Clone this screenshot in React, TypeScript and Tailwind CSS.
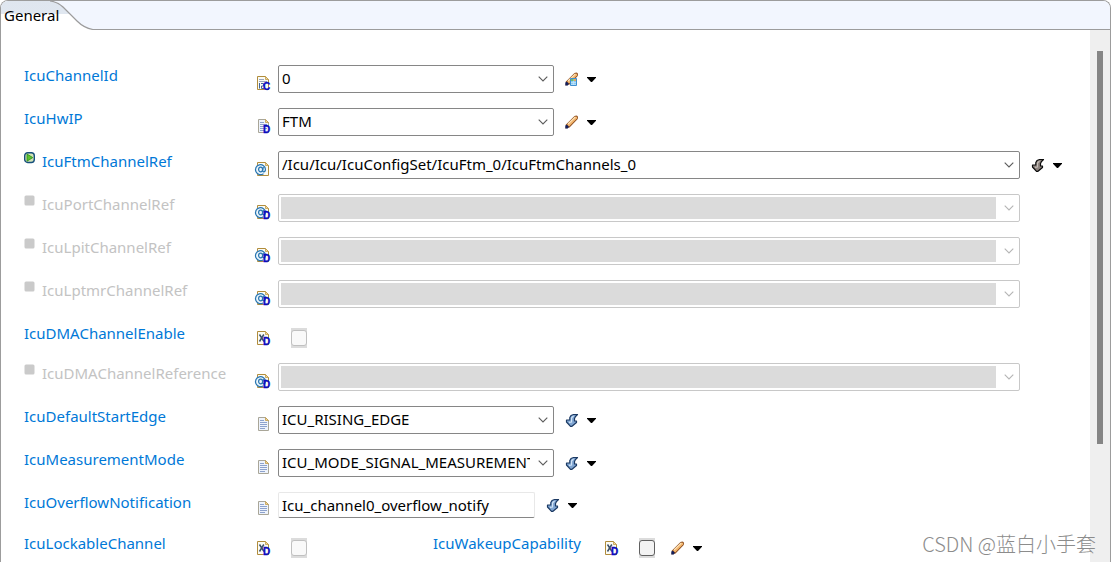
import { useState } from 'react';
import type { ReactNode } from 'react';

type IconKind = 'plain' | 'number' | 'text' | 'ref' | 'bool';
type ActionKind = 'pencil' | 'calc' | 'arrow' | 'arrowDark';

const NodeIcon = ({ kind, badge }: { kind: IconKind; badge?: string }) => {
  const soft = kind === 'plain' || kind === 'text';
  return (
    <svg width="16" height="16" viewBox="0 0 16 16" className="shrink-0 overflow-visible font-['Liberation_Sans',sans-serif]" aria-hidden="true">
      <path
        d={soft ? 'M3.5 1.5h7l3 3v10h-10z' : 'M2.5 1.5h8l3 3v10h-11z'}
        fill={soft ? '#eef3fc' : '#fbfbf4'}
        stroke={soft ? '#a9a698' : '#b08c3c'}
      />
      <path d="M10.5 1.5v3h3z" fill="#f0d9a0" stroke="#c09a4a" strokeWidth="0.8" />
      {soft && <path d="M5 4.5h4M5 6.5h7M5 8.5h7M5 10.5h7M5 12.5h5" stroke="#8da2cc" />}
      {kind === 'number' && (
        <>
          <path d="M4 4.5h5M4 6.5h8" stroke="#9aa7c0" />
          <path d="M4.5 8v5.5M6 8.5h2.5v2.5h-2v2.5h2.5" fill="none" stroke="#41659b" />
        </>
      )}
      {kind === 'ref' && (
        <>
          <circle cx="5.5" cy="8.5" r="5.5" fill="#eaf5fc" />
          <path d="M8.5 12.7A5 5 0 1 1 10.5 8.5q-.2 2.3-1.8 2.3-1.2 0-1-1.3L8.3 6" fill="none" stroke="#2a76b0" strokeWidth="1.2" />
          <ellipse cx="5.6" cy="8.5" rx="2" ry="2.3" fill="none" stroke="#2a76b0" strokeWidth="1.2" />
        </>
      )}
      {kind === 'bool' && (
        <path d="M4.5 4.5l4.5 7M8.8 4.5l-4.3 7" stroke="#3c5068" strokeWidth="1.5" />
      )}
      {badge && (
        <text x="8" y="15" fontSize="10" fontWeight="bold" fill="#0a0ac0" stroke="#0a0ac0" strokeWidth="0.3">
          {badge}
        </text>
      )}
    </svg>
  );
};

const ActionIcon = ({ kind }: { kind: ActionKind }) => {
  if (kind === 'arrow' || kind === 'arrowDark') {
    const dark = kind === 'arrowDark';
    return (
      <svg width="16" height="16" viewBox="0 0 16 16" aria-hidden="true">
        <path
          d="M13.5 2.5H9.5L7 3.5 5.8 5.5V8H2.5V10L6.5 14.3H8L12.500 10.5V9H10.5V6.5L11.5 4.5z"
          fill={dark ? '#8b817c' : '#7fa5d2'}
          stroke={dark ? '#0b0b0b' : '#1c3a63'}
          strokeWidth="1.2"
          strokeLinejoin="round"
        />
        <path d="M9.5 3.8L7.5 6v4l-2.5.3" fill="none" stroke={dark ? '#c4bcb6' : '#d2e4f6'} strokeWidth="1.2" />
      </svg>
    );
  }
  return (
    <svg width="16" height="16" viewBox="0 0 16 16" aria-hidden="true">
      <path d="M2 10.5L10.5 2q2-1.2 3 0t.2 3L5.5 13.5l-4 1z" fill="#8a4a1c" />
      <path d="M3 10.7L11 2.8q1.5-.6 2 .2t0 1.5L5.2 12.5z" fill="#f2b46c" />
      <path d="M4 10L11.3 3" stroke="#fde3b8" strokeWidth="1.1" />
      <path d="M1.3 11.5l1.5-.8 2 2-1 1.8H1.3z" fill="#15205c" />
      {kind === 'calc' && (
        <>
          <path d="M6.5 7.5h6v7h-6z" fill="#8cc9f2" stroke="#3f8fd0" />
          <path d="M7 8h2.5v2H7z" fill="#6cc06a" />
          <path d="M10 8h2v2h-2z" fill="#e8a75c" />
          <path d="M7 11.5h5M7 13.5h5M9.5 10v4" stroke="#c6e6fa" strokeWidth="0.7" />
        </>
      )}
    </svg>
  );
};

const Actions = ({ kind, name }: { kind: ActionKind; name: string }) => (
  <div className="flex items-center gap-[7px]">
    <button type="button" aria-label={`Edit ${name}`}>
      <ActionIcon kind={kind} />
    </button>
    <button type="button" aria-label={`Options for ${name}`}>
      <svg width="9" height="5" viewBox="0 0 9 5" className="block" aria-hidden="true">
        <path d="M0 0h9v.8L5 5H4L0 .8z" fill="#000" />
      </svg>
    </button>
  </div>
);

const StateMark = ({ active }: { active: boolean }) => (
  <svg width="11" height="12" viewBox="0 0 11 12" className="mt-px shrink-0" aria-hidden="true">
    {active ? (
      <>
        <rect x="0.7" y="0.7" width="9.6" height="9.8" rx="3" fill="#d3e3b8" stroke="#17507c" strokeWidth="1.4" />
        <path d="M3 2L8.8 5.6 3 9.2z" fill="#5cc42c" stroke="#2c8a1c" strokeWidth="0.8" />
      </>
    ) : (
      <rect x="0.5" y="0.5" width="10" height="10" rx="1.5" fill="#cacaca" />
    )}
  </svg>
);

interface RowProps {
  id: string;
  icon: IconKind;
  badge?: string;
  optional?: boolean;
  disabled?: boolean;
  compact?: boolean;
  children: ReactNode;
}

const Row = ({ id, icon, badge, optional, disabled, compact, children }: RowProps) => (
  <div className="flex items-start">
    <div className="flex w-[231px] shrink-0 gap-[7px]">
      {optional && <StateMark active={!disabled} />}
      <label htmlFor={id} className={`leading-5 ${disabled ? 'text-[#c3c3c3]' : 'text-[#0078d7]'}`}>
        {id}
      </label>
    </div>
    <div className={`mr-[7px] ${compact ? 'pt-2' : 'pt-2.5'}`}>
      <NodeIcon kind={icon} badge={badge} />
    </div>
    {children}
  </div>
);

interface ComboProps {
  id: string;
  value?: string;
  disabled?: boolean;
  wide?: boolean;
}

const Combo = ({ id, value = '', disabled, wide }: ComboProps) => (
  <div className={`relative ${wide ? 'flex-1' : 'w-[276px]'}`}>
    <select
      id={id}
      disabled={disabled}
      defaultValue={value}
      className={`block h-7 w-full appearance-none rounded-[2px] border pr-[23px] ${
        disabled
          ? 'border-[#c8c8c8] bg-[#dbdbdb] bg-clip-content py-0.5 pl-0.5'
          : 'border-[#868686] bg-white pb-0.5 pl-[3px] text-black'
      }`}
    >
      <option value={value}>{value}</option>
    </select>
    <svg
      width="10"
      height="6"
      viewBox="0 0 10 6"
      className="pointer-events-none absolute top-[11px] right-1.5"
      aria-hidden="true"
    >
      <path d="M.7.7L5 5 9.3.7" fill="none" stroke={disabled ? '#b5b5b5' : '#5c5c5c'} strokeWidth="1.1" />
    </svg>
  </div>
);

const Check = ({ id, disabled }: { id: string; disabled?: boolean }) => (
  <div className="ml-[13px] bg-[#dcdcdc] py-0.5">
    <input
      id={id}
      type="checkbox"
      disabled={disabled}
      className={`block h-4 w-4 appearance-none rounded-[3px] border checked:bg-[#0078d7] ${
        disabled ? 'border-[#c0c0c0] bg-[#f9f9f9]' : 'border-[#606060] bg-[#f3f3f3]'
      }`}
    />
  </div>
);

const disabledRefs = ['IcuPortChannelRef', 'IcuLpitChannelRef', 'IcuLptmrChannelRef'];

const App = () => {
  const [notification, setNotification] = useState('Icu_channel0_overflow_notify');

  return (
    <div className="relative flex h-screen flex-col overflow-hidden rounded-t-lg border-x border-t border-[#9c9c9c] bg-white font-['Noto_Sans',sans-serif] text-[15px]">
      <div className="relative h-[29px] shrink-0 border-b border-[#9c9c9c] bg-[#f2f6fe]">
        <svg width="92" height="29" viewBox="0 0 92 29" className="absolute top-0 left-0" aria-hidden="true">
          <defs>
            <linearGradient id="tab" x1="0" y1="0" x2="0" y2="1">
              <stop offset="0" stopColor="#dfe6ef" />
              <stop offset="0.44" stopColor="#e0e7f0" />
              <stop offset="0.46" stopColor="#fff" />
            </linearGradient>
          </defs>
          <path d="M0 0H49Q57 1 62 6L76 20Q83 27 92 28.5V29H0z" fill="url(#tab)" />
          <path d="M0 28.5H89" stroke="#fff" />
          <path d="M49 0Q57 1 62 6L76 20Q83 27 92 28.5" fill="none" stroke="#9c9c9c" strokeWidth="1.2" />
        </svg>
        <button type="button" className="relative block pt-1 pl-[3px] leading-5 text-black">
          General
        </button>
      </div>

      <div className="flex min-h-0 flex-1">
        <div className="flex min-w-0 flex-1 flex-col gap-[15px] overflow-hidden pt-[35px] pl-[23px]">
          <Row id="IcuChannelId" icon="number" badge="C">
            <Combo id="IcuChannelId" value="0" />
            <div className="flex h-7 pl-2.5">
              <Actions kind="calc" name="IcuChannelId" />
            </div>
          </Row>
          <Row id="IcuHwIP" icon="text" badge="D">
            <Combo id="IcuHwIP" value="FTM" />
            <div className="flex h-7 pl-2.5">
              <Actions kind="pencil" name="IcuHwIP" />
            </div>
          </Row>
          <Row id="IcuFtmChannelRef" icon="ref" optional>
            <Combo id="IcuFtmChannelRef" value="/Icu/Icu/IcuConfigSet/IcuFtm_0/IcuFtmChannels_0" wide />
            <div className="flex h-7 w-[70px] pl-2.5">
              <Actions kind="arrowDark" name="IcuFtmChannelRef" />
            </div>
          </Row>
          {disabledRefs.map((id) => (
            <Row key={id} id={id} icon="ref" badge="D" optional disabled>
              <Combo id={id} disabled wide />
              <div className="w-[70px]" />
            </Row>
          ))}
          <div className="flex h-[25px] items-start">
            <label htmlFor="IcuDMAChannelEnable" className="w-[231px] shrink-0 leading-5 text-[#0078d7]">
              IcuDMAChannelEnable
            </label>
            <div className="flex h-[30px] items-center">
              <div className="mr-[7px]">
                <NodeIcon kind="bool" badge="D" />
              </div>
              <Check id="IcuDMAChannelEnable" disabled />
            </div>
          </div>
          <Row id="IcuDMAChannelReference" icon="ref" badge="D" optional disabled>
            <Combo id="IcuDMAChannelReference" disabled wide />
            <div className="w-[70px]" />
          </Row>
          <Row id="IcuDefaultStartEdge" icon="plain">
            <Combo id="IcuDefaultStartEdge" value="ICU_RISING_EDGE" />
            <div className="flex h-7 pl-2.5">
              <Actions kind="arrow" name="IcuDefaultStartEdge" />
            </div>
          </Row>
          <Row id="IcuMeasurementMode" icon="plain">
            <Combo id="IcuMeasurementMode" value="ICU_MODE_SIGNAL_MEASUREMENT" />
            <div className="flex h-7 pl-2.5">
              <Actions kind="arrow" name="IcuMeasurementMode" />
            </div>
          </Row>
          <Row id="IcuOverflowNotification" icon="plain" compact>
            <input
              id="IcuOverflowNotification"
              type="text"
              value={notification}
              onChange={(e) => setNotification(e.target.value)}
              className="h-[26px] w-[257px] rounded-[2px] border border-[#e8e8e8] border-b-[#868686] bg-white pl-[3px] text-black"
            />
            <div className="flex h-[26px] pl-2.5">
              <Actions kind="arrow" name="IcuOverflowNotification" />
            </div>
          </Row>
          <div className="flex items-start">
            <label htmlFor="IcuLockableChannel" className="w-[231px] shrink-0 leading-5 text-[#0078d7]">
              IcuLockableChannel
            </label>
            <div className="flex h-[30px] w-[178px] items-center">
              <div className="mr-[7px]">
                <NodeIcon kind="bool" badge="D" />
              </div>
              <Check id="IcuLockableChannel" disabled />
            </div>
            <label htmlFor="IcuWakeupCapability" className="w-[170px] shrink-0 leading-5 text-[#0078d7]">
              IcuWakeupCapability
            </label>
            <div className="flex h-[30px] items-center">
              <div className="mr-[7px]">
                <NodeIcon kind="bool" badge="D" />
              </div>
              <Check id="IcuWakeupCapability" />
              <div className="pl-[15px]">
                <Actions kind="pencil" name="IcuWakeupCapability" />
              </div>
            </div>
          </div>
        </div>
        <div className="w-5 shrink-0 bg-[#efefef] pt-[21px]">
          <div className="mx-auto h-[77%] w-1.5 bg-[#858585]" />
        </div>
      </div>

      <div className="absolute right-3.5 bottom-1 font-['Noto_Sans_CJK_SC',sans-serif] text-xl leading-7 font-light text-[#8c8c8c]">
        CSDN @蓝白小手套
      </div>
    </div>
  );
};

export default App;
